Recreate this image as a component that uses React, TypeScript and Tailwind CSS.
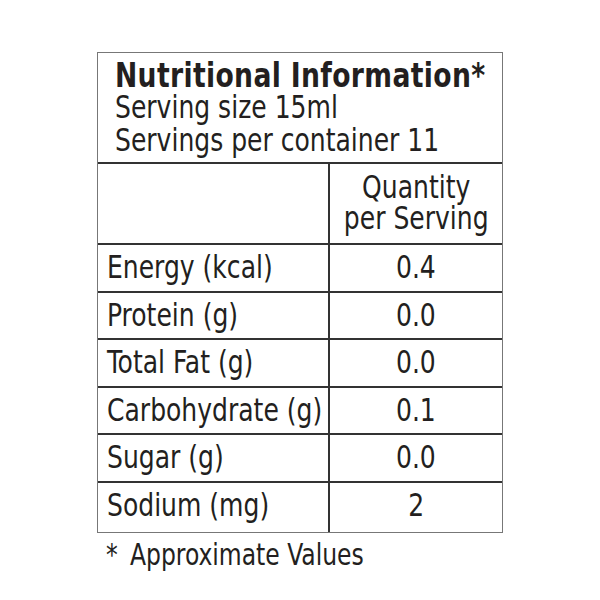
const rows: [string, string][] = [
  ["Energy (kcal)", "0.4"],
  ["Protein (g)", "0.0"],
  ["Total Fat (g)", "0.0"],
  ["Carbohydrate (g)", "0.1"],
  ["Sugar (g)", "0.0"],
  ["Sodium (mg)", "2"],
];

// The label font is a narrow grotesque; squeeze DejaVu Condensed to match its width.
function Narrow({ children, center = false }: { children: React.ReactNode; center?: boolean }) {
  return (
    <span
      className={`inline-block whitespace-nowrap scale-x-[0.87] ${center ? "origin-center" : "origin-left"}`}
    >
      {children}
    </span>
  );
}

export default function App() {
  return (
    <div
      className="min-h-[600px] bg-white pt-[52px] pl-[97px] text-[#231f20]"
      style={{ fontFamily: '"DejaVu Sans Condensed", "Liberation Sans", sans-serif' }}
    >
      <div className="w-[406px] border border-[#777]">
        {/* Header */}
        <div className="h-[111px] border-b-2 border-[#333] pl-[17px] pt-[7px]">
          <h1 className="text-[34px] font-bold leading-[31px] tracking-[0.4px]">
            <Narrow>Nutritional Information*</Narrow>
          </h1>
          <p className="text-[32px] leading-[33px]">
            <Narrow>Serving size 15ml</Narrow>
          </p>
          <p className="text-[32px] leading-[33px]">
            <Narrow>Servings per container 11</Narrow>
          </p>
        </div>

        {/* Column heading */}
        <div className="grid h-[81px] grid-cols-[232px_1fr] border-b-2 border-[#333]">
          <div className="border-r-2 border-[#333]" />
          <div className="flex flex-col items-center justify-center pb-[2px] text-[32px] leading-[31px]">
            <Narrow center>Quantity</Narrow>
            <Narrow center>per Serving</Narrow>
          </div>
        </div>

        {/* Rows */}
        {rows.map(([label, value], i) => (
          <div
            key={label}
            className={`grid grid-cols-[232px_1fr] ${
              i < rows.length - 1 ? "h-[47.5px] border-b-2 border-[#333]" : "h-[49px]"
            }`}
          >
            <div className="border-r-2 border-[#333] pl-[9px] text-[32px] leading-[44px]">
              <Narrow>{label}</Narrow>
            </div>
            <div className="text-center text-[32px] leading-[44px]">
              <Narrow center>{value}</Narrow>
            </div>
          </div>
        ))}
      </div>

      <p className="mt-[2px] pl-[9px] text-[30px] leading-[40px]">
        <Narrow>
          <span className="mr-[14px]">*</span>Approximate Values
        </Narrow>
      </p>
    </div>
  );
}
